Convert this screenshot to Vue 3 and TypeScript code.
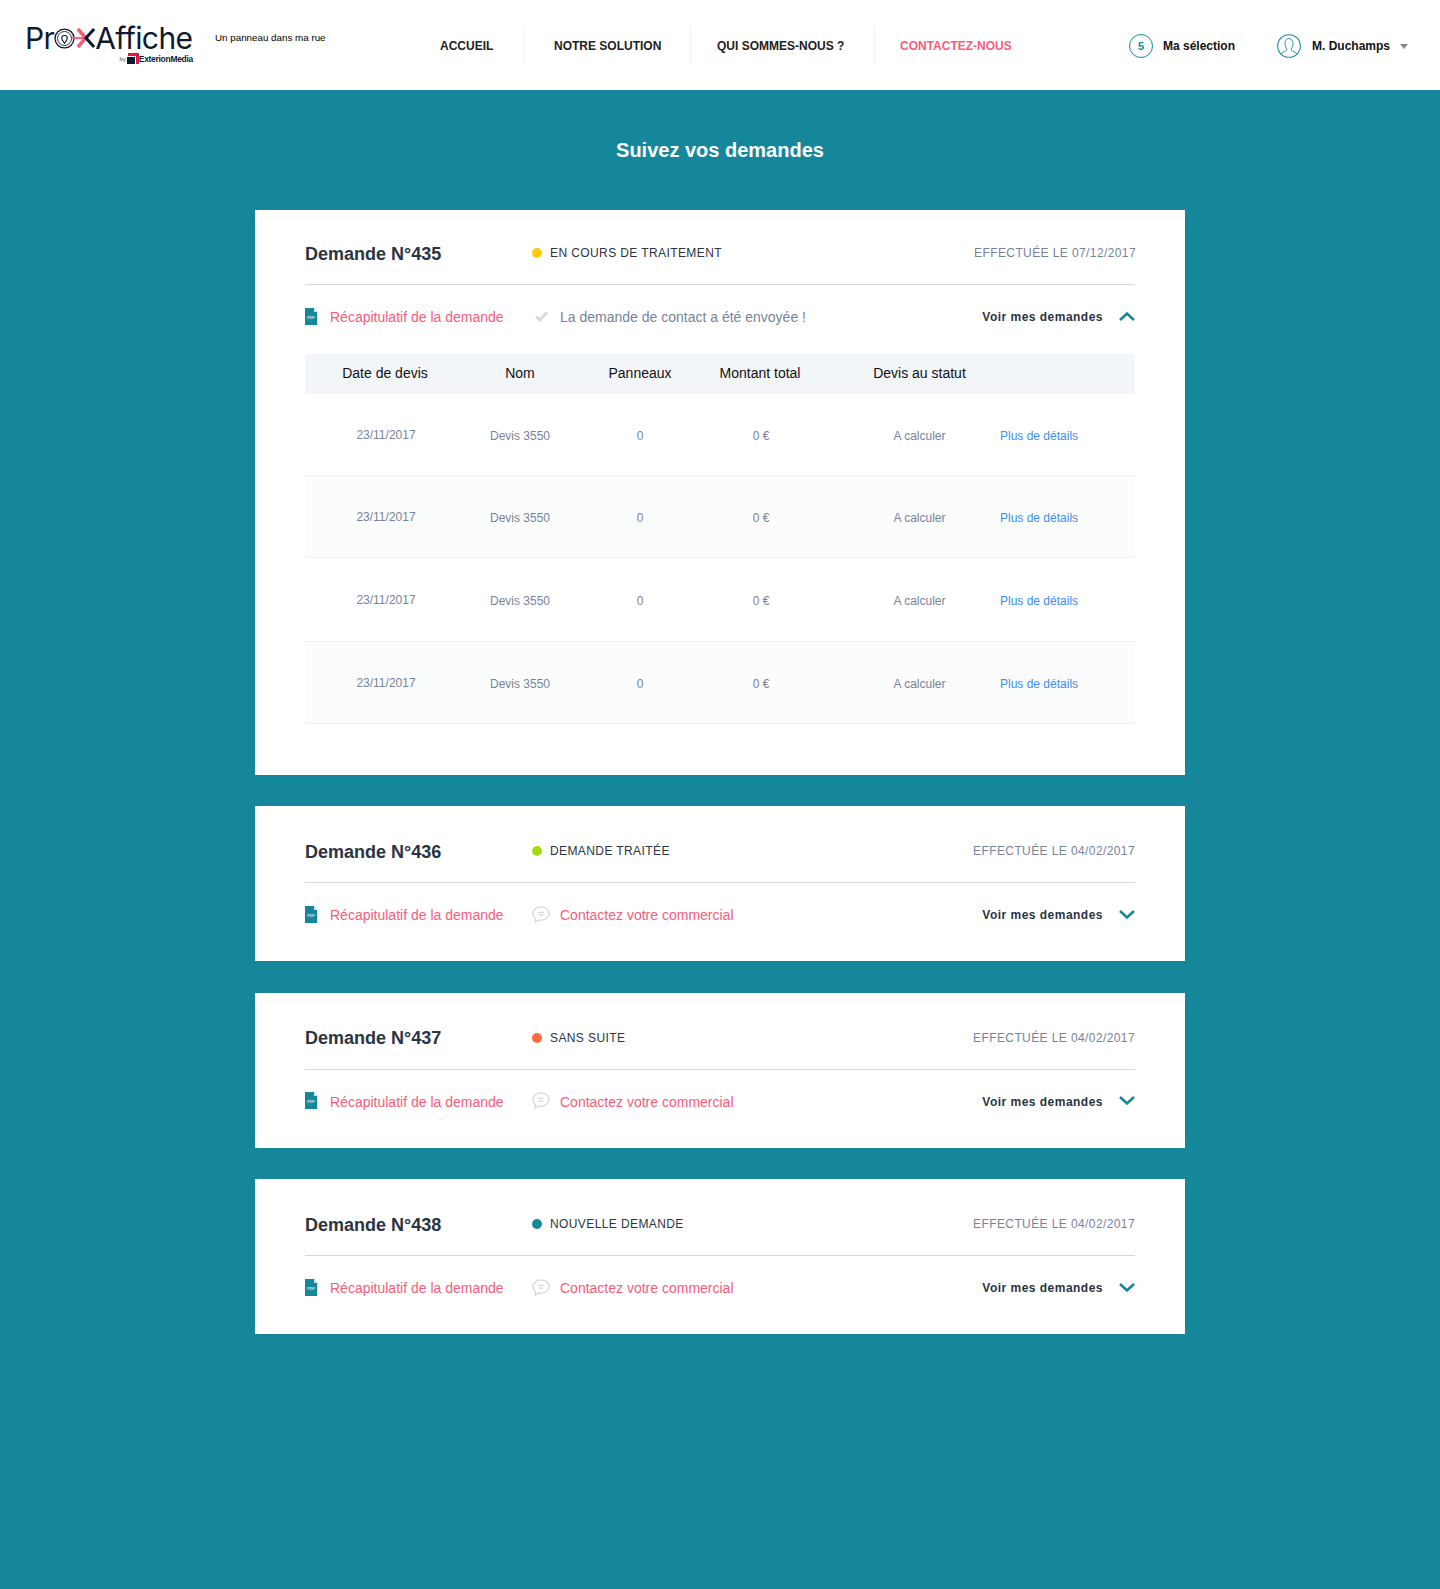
<script setup lang="ts">
interface Req { id: number; color: string; status: string; date: string; open: boolean }
const requests: Req[] = [
  { id: 435, color: '#ffcb0c', status: 'EN COURS DE TRAITEMENT', date: '07/12/2017', open: true },
  { id: 436, color: '#a4dc14', status: 'DEMANDE TRAITÉE', date: '04/02/2017', open: false },
  { id: 437, color: '#ff6b3d', status: 'SANS SUITE', date: '04/02/2017', open: false },
  { id: 438, color: '#15879a', status: 'NOUVELLE DEMANDE', date: '04/02/2017', open: false },
]
const rows = [0, 1, 2, 3]
</script>

<template>
  <div class="page">
    <header class="topbar">
      <div class="logo">
        <div class="logo-word">
          <span>Pr</span>
          <svg class="logo-o" width="21" height="21" viewBox="0 0 24 24" fill="none">
            <circle cx="12" cy="12" r="10.8" stroke="#0f1a30" stroke-width="1.500" />
            <circle cx="12" cy="12" r="8" stroke="#0f1a30" stroke-width="1" />
            <path d="M12 17.500c-2-2.600-3.200-4-3.200-5.700a3.200 3.200 0 0 1 6.400 0c0 1.700-1.200 3.100-3.200 5.700z" stroke="#0f1a30" stroke-width="1.300" />
          </svg>
          <svg class="logo-x" width="20" height="22" viewBox="0 0 21 22" fill="none">
            <path d="M-4 11H9" stroke="#f95b7a" stroke-width="2" />
            <path d="M2 1.500 10 11 2 20.500" stroke="#f95b7a" stroke-width="3.800" />
            <path d="M19 1.500 10.500 11 19 20.500" stroke="#0f1a30" stroke-width="3.200" />
          </svg>
          <span>Affiche</span>
        </div>
        <div class="logo-by">
          <span class="by">by</span>
          <svg width="12" height="11" viewBox="0 0 12 11"><path d="M1 0h11v11H9V3H1z" fill="#e2173f" /><path d="M0 4h8v7H0z" fill="#0f1a30" /></svg>
          <span class="ext">ExterionMedia</span>
        </div>
      </div>
      <div class="tagline">Un panneau dans ma rue</div>
      <nav class="nav">
        <a class="nav-a n1">ACCUEIL</a>
        <a class="nav-a n2">NOTRE SOLUTION</a>
        <a class="nav-a n3">QUI SOMMES-NOUS ?</a>
        <a class="nav-a n4 pink">CONTACTEZ-NOUS</a>
      </nav>
      <div class="sel"><span class="round">5</span><span>Ma sélection</span></div>
      <div class="user">
        <svg width="24" height="24" viewBox="0 0 25 25" fill="none" stroke="#15879a">
          <circle cx="12.500" cy="12.500" r="11.800" stroke-width="1.100" />
          <path d="M4.500 21c.6-2.500 5-3 5.600-4.300.3-.8 0-1.500-.5-2.300-.8-1.200-1.300-2.700-1.300-4.500 0-3 1.700-5.200 4.200-5.200s4.200 2.200 4.200 5.200c0 1.800-.5 3.300-1.300 4.500-.5.800-.8 1.500-.5 2.300.6 1.300 5 1.800 5.600 4.300" stroke-width=".9" />
        </svg>
        <span>M. Duchamps</span>
        <i class="caret"></i>
      </div>
    </header>

    <main class="main">
      <h1 class="title">Suivez vos demandes</h1>
      <section v-for="r in requests" :key="r.id" class="card" :class="{ open: r.open }">
        <div class="card-head">
          <h2 class="card-title">Demande N°{{ r.id }}</h2>
          <div class="status"><i class="dot" :style="{ background: r.color }"></i>{{ r.status }}</div>
          <div class="date">EFFECTUÉE LE {{ r.date }}</div>
        </div>
        <div class="card-actions">
          <a class="recap">
            <svg width="13" height="17" viewBox="0 0 13 17">
              <path d="M0 0h9l3 4v13H0z" fill="#15879a" />
              <path d="M9 0l4 4v13h-1V4H9z" fill="#cfe6ea" />
              <text x="6" y="10.500" text-anchor="middle" font-size="3.800" font-weight="700" fill="#cfe7ec" font-family="Liberation Sans, sans-serif">PDF</text>
            </svg>
            Récapitulatif de la demande
          </a>
          <div v-if="r.open" class="note">
            <svg class="check" width="13" height="11" viewBox="0 0 13 11" fill="none"><path d="M1 5.500 4.800 9 12 1.300" stroke="#d3dae0" stroke-width="3" /></svg>
            La demande de contact a été envoyée !
          </div>
          <a v-else class="note pinkt">
            <svg width="18" height="17" viewBox="0 0 18 17" fill="none" stroke="#d3dae0" stroke-width="1.300">
              <path d="M9 .8c4.500 0 8 2.900 8 6.700s-3.500 6.700-8 6.700c-.9 0-1.700-.1-2.500-.3L3.200 16.300l.3-3.500C2 11.500 1 9.600 1 7.500 1 3.700 4.500.8 9 .8z" />
              <path d="M5.800 6.300h6.400M6.800 9h4.400" />
            </svg>
            Contactez votre commercial
          </a>
          <a class="toggle">
            Voir mes demandes
            <svg width="16" height="9" viewBox="0 0 16 9" fill="none">
              <path :d="r.open ? 'M1 8 8 1.600 15 8' : 'M1 1 8 7.400 15 1'" stroke="#15879a" stroke-width="2.600" />
            </svg>
          </a>
        </div>
        <div v-if="r.open" class="table">
          <div class="t-head">
            <span class="c1">Date de devis</span><span class="c2">Nom</span><span class="c3">Panneaux</span><span class="c4 hc4">Montant total</span><span class="c5">Devis au statut</span>
          </div>
          <div v-for="n in rows" :key="n" class="t-row" :class="{ alt: n % 2 === 1 }">
            <span class="c1 up">23/11/2017</span><span class="c2">Devis 3550</span><span class="c3">0</span><span class="c4">0 €</span><span class="c5">A calculer</span><a class="c6">Plus de détails</a>
          </div>
        </div>
      </section>
    </main>
  </div>
</template>

<style>
html, body { margin: 0; background: #15879a; }
</style>

<style scoped>
.page {
  width: 1440px;
  height: 1589px;
  background: #15879a;
  font-family: "Liberation Sans", Arial, sans-serif;
  color: #2a3442;
  overflow: hidden;
}
.topbar {
  height: 90px;
  background: #fff;
  display: flex;
  align-items: center;
  color: #111;
}
.logo { width: 215px; padding-left: 25px; box-sizing: border-box; margin-top: -1px; }
.logo-word {
  display: flex;
  align-items: center;
  font-family: Inter, "Liberation Sans", sans-serif;
  font-size: 30px;
  letter-spacing: -0.6px;
  color: #0f1a30;
  height: 28px;
}
.logo-o { margin: 0 1px 0 0; flex: none; }
.logo-x { margin-right: -1px; flex: none; overflow: visible; }
.logo-by { display: flex; justify-content: flex-end; align-items: center; width: 168px; height: 13px; }
.by { font-size: 6px; color: #555; margin-right: 1px; }
.ext { font-size: 8.500px; font-weight: 700; letter-spacing: -0.3px; color: #0f1a30; }
.tagline { font-size: 9.800px; width: 225px; margin-top: -16px; color: #000; }
.nav { display: flex; align-items: center; height: 40px; font-size: 12px; font-weight: 700; margin-top: 1px; }
.nav-a { display: flex; align-items: center; height: 38px; color: #222; box-sizing: border-box; border-right: 1px solid #f0f2f3; }
.n1 { width: 84px; }
.n2 { padding-left: 30px; width: 167px; }
.n3 { padding-left: 26px; width: 184px; }
.n4 { padding-left: 25px; border-right: none; width: 254px; }
.pink { color: #f95b7a; }
.sel { display: flex; align-items: center; gap: 10px; font-size: 12px; font-weight: 700; width: 148px; margin-top: 1px; }
.round { width: 24px; height: 24px; box-sizing: border-box; border: 1px solid #15879a; border-radius: 50%; color: #15879a; display: flex; align-items: center; justify-content: center; font-size: 11px; }
.user { display: flex; align-items: center; gap: 11px; font-size: 12px; font-weight: 700; margin-top: 1px; }
.caret { width: 0; height: 0; border-left: 4.500px solid transparent; border-right: 4.500px solid transparent; border-top: 5px solid #888; margin-top: 2px; margin-left: -1px; }

.main { display: flex; flex-direction: column; align-items: center; }
.title { margin: 0; height: 120px; padding-top: 48px; box-sizing: border-box; font-size: 20px; line-height: 24px; font-weight: 700; color: #fff; }
.card { width: 930px; height: 155px; background: #fff; padding: 0 50px; box-sizing: border-box; margin-bottom: 31.500px; }
.card.open { height: 565px; margin-bottom: 31px; }
.card-head { display: flex; align-items: center; height: 77px; border-bottom: 1px solid #d3d8dc; padding-top: 14px; box-sizing: border-box; }
.open .card-head { height: 75px; padding-top: 12px; }
.card-title { margin: 0; width: 227px; font-size: 18px; font-weight: 700; color: #2a3442; position: relative; top: 1px; }
.status { display: flex; align-items: center; gap: 8px; font-size: 12px; letter-spacing: 0.4px; color: #2a3442; flex: 1; }
.dot { width: 10px; height: 10px; border-radius: 50%; }
.date { font-size: 12px; letter-spacing: 0.4px; color: #77839a; }
.open .date { margin-right: -1px; }
.card-actions { display: flex; align-items: center; height: 64px; font-size: 14px; }
.card-actions svg { margin-bottom: 2px; }
.recap { display: flex; align-items: center; gap: 12px; width: 227px; color: #f95b7a; }
.note { display: flex; align-items: center; gap: 10px; color: #77839a; flex: 1; }
.card-actions .check { margin: 0 2px 2px 3px; }
.pinkt { color: #f95b7a; }
.toggle { display: flex; align-items: center; gap: 16px; font-size: 12px; font-weight: 700; letter-spacing: 0.48px; color: #2a3442; }
.table { margin-top: 5px; }
.t-head { display: flex; height: 40px; align-items: center; background: #f3f6f9; font-size: 14px; color: #111; box-sizing: border-box; padding-bottom: 2px; }
.t-row { display: flex; height: 82px; align-items: center; border-bottom: 1px solid #edf0f3; font-size: 12px; color: #77839a; box-sizing: border-box; padding-top: 2px; }
.t-row:nth-child(4) { height: 84px; }
.t-row.alt { background: #fbfcfc; }
.c1, .c2, .c3, .c4, .c5 { display: block; text-align: center; }
.c1 { width: 160px; }
.c2 { width: 110px; }
.c3 { width: 130px; }
.c4 { width: 112px; }
.hc4 { position: relative; left: -1px; }
.c5 { width: 205px; }
.up { position: relative; top: -1px; left: 1px; }
.c6 { color: #3a8ef6; margin-left: -22px; }
</style>
